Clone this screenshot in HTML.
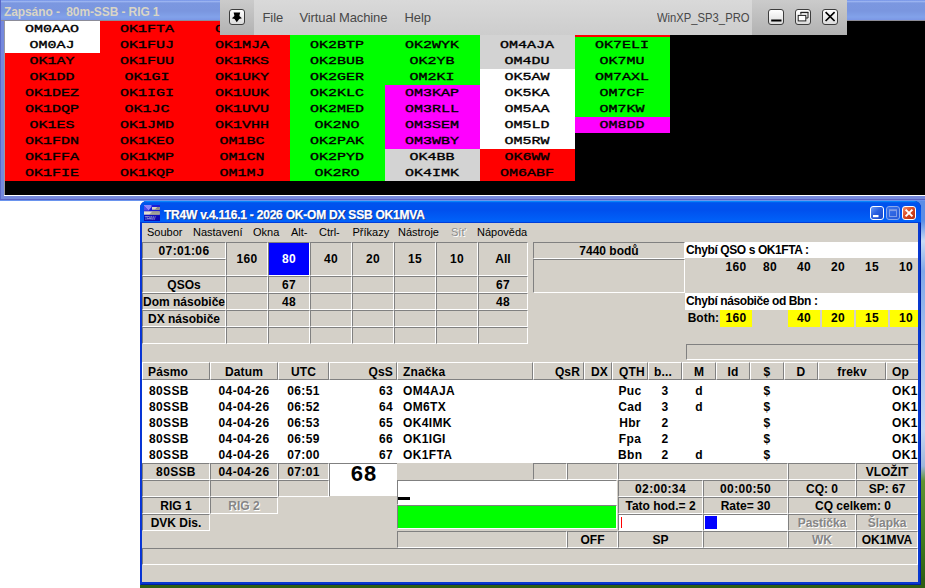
<!DOCTYPE html>
<html lang="cs"><head><meta charset="utf-8"><title>TR4W</title>
<style>
html,body{margin:0;padding:0}
body{width:925px;height:588px;overflow:hidden;background:#fff;position:relative;font-family:"Liberation Sans",sans-serif}
div,span,b,i{box-sizing:border-box}
#wall{position:absolute;left:600px;top:201px;width:325px;height:387px;background:linear-gradient(to bottom,#5a8de6 0,#5a8de6 20px,#c9dcf5 40px,#7fa8ea 70px,#a9c4ef 150px,#c5d7f3 230px,#9cb6dc 265px,#5f9332 280px,#3f7a1c 340px,#2c5a12 387px)}
#wallb{position:absolute;left:140px;top:578px;width:785px;height:10px;background:#2f5e14}
/* top window */
#w1{position:absolute;left:0;top:0;width:925px;height:201px;background:#7488dc;overflow:hidden}
#w1 .tb{position:absolute;left:0;top:0;width:925px;height:21px;background:linear-gradient(to bottom,#7190e6 0,#9ab3f0 1.5px,#7b97e0 3px,#7a96df 11px,#82a2ea 17px,#7d99e6 19.5px,#8c8c98 20.5px,#8c8c98 21px)}
#w1 .tt{position:absolute;left:4px;top:4px;height:16px;line-height:16px;font-weight:bold;font-size:12px;letter-spacing:-.1px;color:#d9d5c6;white-space:pre}
#w1 .cl{position:absolute;left:5px;top:21px;width:920px;height:174px;background:#000}
#w1 .bline{position:absolute;left:4px;top:195px;width:921px;height:1px;background:#fff}
#w1 .gl{position:absolute;left:4px;top:21px;width:1px;height:174px;background:#9a9aa0}
#w1 .lb{position:absolute;left:0;top:0;width:1px;height:201px;background:#5a68c8}
#w1 .bb{position:absolute;left:0;top:199px;width:925px;height:2px;background:linear-gradient(to bottom,#5a62c4 0,#5a62c4 1px,#6a94ee 1px)}
.c{position:absolute;width:95px;height:16px;text-align:center;font-family:"Liberation Mono",monospace;font-weight:normal;font-size:15px;line-height:16px;color:#000;overflow:hidden}
.c span{display:inline-block;transform:translateX(-.5px) scaleY(.78);transform-origin:50% 68%;letter-spacing:0;-webkit-text-stroke:.45px #000}
.r{background:#f00}.g{background:#0f0}.m{background:#f0f}.w{background:#fff}.l{background:#d3d3d3}
/* vm toolbar */
#vm{position:absolute;left:220px;top:0;width:627px;height:35px;background:linear-gradient(to bottom,#d9d9d9,#cdcdcd);color:#484848;font-size:13px;letter-spacing:-.1px}
#vm .dk{position:absolute;top:0;height:35px;background:linear-gradient(to bottom,#cbcbcb,#b2b2b2)}
#vm span{position:absolute;top:10px;line-height:16px;white-space:nowrap}
#vm .bt{position:absolute;top:9px;width:16px;height:16px;border:1px solid #3c3c3c;border-radius:3px;background:linear-gradient(to bottom,#fff,#dcdcdc)}
#vm .bt svg{position:absolute;left:-1px;top:-1px}
/* tr4w */
#w2{position:absolute;left:140px;top:201px;width:781px;height:384px;background:#0838d0;border-radius:7px 7px 0 0;overflow:hidden;box-shadow:inset 1px 0 0 #0831d9,inset -1px 0 0 #001ea0,inset 0 -1px 0 #001ea0}
#w2 .tb{position:absolute;left:0;top:0;width:781px;height:22px;background:linear-gradient(180deg,#0997ff 0,#0053ee 8%,#0050ee 40%,#0060f8 88%,#0060f8 93%,#005bff 95%,#003dd7 97%,#003dd7)}
#w2 .cb{position:absolute;top:5px;width:14px;height:14px;border:1px solid #fff;border-radius:3px;background:linear-gradient(135deg,#6a9cf8 0,#2a60e0 45%,#1a48c8 100%)}
#w2 .cb.x{background:linear-gradient(135deg,#f0906c 0,#d84a24 45%,#b42c0c 100%)}
#w2 .cb.mx{border-color:#8aa8ec;background:linear-gradient(135deg,#3a74ec 0,#2458d8 100%)}
#w2 .cb svg{position:absolute;left:-1px;top:-1px}
#w2 .ic{position:absolute;left:4px;top:4px}
#w2 .tt{position:absolute;left:24px;top:6px;line-height:16px;font-weight:bold;font-size:12px;letter-spacing:-.22px;color:#fff;white-space:pre;text-shadow:1px 1px 0 #0a2a80;-webkit-text-stroke:.25px #fff}
#clip{position:absolute;left:0;top:0;width:918px;height:582px;overflow:hidden}
#face{position:absolute;left:142px;top:223px;width:776px;height:359px;background:#d4d0c8}
.mi{position:absolute;top:224px;font-size:11px;line-height:16px;color:#000;white-space:nowrap}
.dism{color:#8e8e8e;text-shadow:1px 1px 0 #fff}
.s{position:absolute;border:1px solid;border-color:#808080 #fff #fff #808080;background:#d4d0c8;text-align:center;font-weight:bold;font-size:12px;color:#000;white-space:nowrap;overflow:hidden}
.n{letter-spacing:.35px}
.s.blue{background:#00f;color:#fff}
.s.dis{color:#868686;text-shadow:1px 1px 0 #fff}
.wl{position:absolute;background:#fff;font-weight:bold;font-size:12px;line-height:17px;letter-spacing:-.4px;padding-left:1px;overflow:hidden;white-space:nowrap}
.bl{position:absolute;width:32px;height:17px;line-height:17px;text-align:center;font-weight:bold;font-size:12px;letter-spacing:.4px}
.bl.y{background:#ff0}
.h{position:absolute;height:18px;line-height:19px;letter-spacing:.15px;border:1px solid;border-color:#fff #808080 #808080 #fff;background:#d4d0c8;font-weight:bold;font-size:12px;white-space:nowrap;overflow:hidden;padding:0 6px}
.d{position:absolute;height:16px;line-height:16px;font-weight:bold;font-size:12px;letter-spacing:.35px;white-space:nowrap;overflow:hidden;padding:0 6px}
.al{text-align:left}.ac{text-align:center}.ar{text-align:right}
.h.ar{padding-right:3px}.d.ar{padding-right:4px}.h.al{padding-left:5px}
.list{position:absolute;background:#fff}
.big{position:absolute;background:#fff;border-top:1px solid #808080;border-left:1px solid #808080;font-family:"Liberation Mono",monospace;font-weight:bold;font-size:22px;line-height:24px;text-align:center}
.entry{position:absolute;background:#fff;border:1px solid;border-color:#808080 #fff #fff #808080}
.entry i{position:absolute;left:0;top:16px;width:12px;height:3px;background:#000}
.green{position:absolute;background:#0f0;border:1px solid;border-color:#808080 #fff #fff #808080}
.redbar{position:absolute;left:2px;top:2px;width:1px;height:11px;background:#f00}
.bluesq{position:absolute;left:1px;top:1px;width:12px;height:13px;background:#00f}
</style></head><body>
<div id="wall"></div><div id="wallb"></div>
<div id="w1"><div class="tb"></div><div class="lb"></div><div class="tt">Zapsáno -  80m-SSB - RIG 1</div><div class="cl"></div><div class="gl"></div><div class="bline"></div><div class="bb"></div>
<div class="c w" style="left:5px;top:21px"><span>OM0AAO</span></div>
<div class="c w" style="left:5px;top:37px"><span>OM0AJ</span></div>
<div class="c r" style="left:5px;top:53px"><span>OK1AY</span></div>
<div class="c r" style="left:5px;top:69px"><span>OK1DD</span></div>
<div class="c r" style="left:5px;top:85px"><span>OK1DEZ</span></div>
<div class="c r" style="left:5px;top:101px"><span>OK1DQP</span></div>
<div class="c r" style="left:5px;top:117px"><span>OK1ES</span></div>
<div class="c r" style="left:5px;top:133px"><span>OK1FDN</span></div>
<div class="c r" style="left:5px;top:149px"><span>OK1FFA</span></div>
<div class="c r" style="left:5px;top:165px"><span>OK1FIE</span></div>
<div class="c r" style="left:100px;top:21px"><span>OK1FTA</span></div>
<div class="c r" style="left:100px;top:37px"><span>OK1FUJ</span></div>
<div class="c r" style="left:100px;top:53px"><span>OK1FUU</span></div>
<div class="c r" style="left:100px;top:69px"><span>OK1GI</span></div>
<div class="c r" style="left:100px;top:85px"><span>OK1IGI</span></div>
<div class="c r" style="left:100px;top:101px"><span>OK1JC</span></div>
<div class="c r" style="left:100px;top:117px"><span>OK1JMD</span></div>
<div class="c r" style="left:100px;top:133px"><span>OK1KEO</span></div>
<div class="c r" style="left:100px;top:149px"><span>OK1KMP</span></div>
<div class="c r" style="left:100px;top:165px"><span>OK1KQP</span></div>
<div class="c r" style="left:195px;top:21px"><span>OK1MAA</span></div>
<div class="c r" style="left:195px;top:37px"><span>OK1MJA</span></div>
<div class="c r" style="left:195px;top:53px"><span>OK1RKS</span></div>
<div class="c r" style="left:195px;top:69px"><span>OK1UKY</span></div>
<div class="c r" style="left:195px;top:85px"><span>OK1UUK</span></div>
<div class="c r" style="left:195px;top:101px"><span>OK1UVU</span></div>
<div class="c r" style="left:195px;top:117px"><span>OK1VHH</span></div>
<div class="c r" style="left:195px;top:133px"><span>OM1BC</span></div>
<div class="c r" style="left:195px;top:149px"><span>OM1CN</span></div>
<div class="c r" style="left:195px;top:165px"><span>OM1MJ</span></div>
<div class="c g" style="left:290px;top:21px"><span>OK2BPA</span></div>
<div class="c g" style="left:290px;top:37px"><span>OK2BTP</span></div>
<div class="c g" style="left:290px;top:53px"><span>OK2BUB</span></div>
<div class="c g" style="left:290px;top:69px"><span>OK2GER</span></div>
<div class="c g" style="left:290px;top:85px"><span>OK2KLC</span></div>
<div class="c g" style="left:290px;top:101px"><span>OK2MED</span></div>
<div class="c g" style="left:290px;top:117px"><span>OK2NO</span></div>
<div class="c g" style="left:290px;top:133px"><span>OK2PAK</span></div>
<div class="c g" style="left:290px;top:149px"><span>OK2PYD</span></div>
<div class="c g" style="left:290px;top:165px"><span>OK2RO</span></div>
<div class="c g" style="left:385px;top:21px"><span>OK2SG</span></div>
<div class="c g" style="left:385px;top:37px"><span>OK2WYK</span></div>
<div class="c g" style="left:385px;top:53px"><span>OK2YB</span></div>
<div class="c g" style="left:385px;top:69px"><span>OM2KI</span></div>
<div class="c m" style="left:385px;top:85px"><span>OM3KAP</span></div>
<div class="c m" style="left:385px;top:101px"><span>OM3RLL</span></div>
<div class="c m" style="left:385px;top:117px"><span>OM3SEM</span></div>
<div class="c m" style="left:385px;top:133px"><span>OM3WBY</span></div>
<div class="c l" style="left:385px;top:149px"><span>OK4BB</span></div>
<div class="c l" style="left:385px;top:165px"><span>OK4IMK</span></div>
<div class="c l" style="left:480px;top:21px"><span>OK4RO</span></div>
<div class="c l" style="left:480px;top:37px"><span>OM4AJA</span></div>
<div class="c l" style="left:480px;top:53px"><span>OM4DU</span></div>
<div class="c w" style="left:480px;top:69px"><span>OK5AW</span></div>
<div class="c w" style="left:480px;top:85px"><span>OK5KA</span></div>
<div class="c w" style="left:480px;top:101px"><span>OM5AA</span></div>
<div class="c w" style="left:480px;top:117px"><span>OM5LD</span></div>
<div class="c w" style="left:480px;top:133px"><span>OM5RW</span></div>
<div class="c r" style="left:480px;top:149px"><span>OK6WW</span></div>
<div class="c r" style="left:480px;top:165px"><span>OM6ABF</span></div>
<div class="c r" style="left:575px;top:21px"><span>OM6TX</span></div>
<div class="c g" style="left:575px;top:37px"><span>OK7ELI</span></div>
<div class="c g" style="left:575px;top:53px"><span>OK7MU</span></div>
<div class="c g" style="left:575px;top:69px"><span>OM7AXL</span></div>
<div class="c g" style="left:575px;top:85px"><span>OM7CF</span></div>
<div class="c g" style="left:575px;top:101px"><span>OM7KW</span></div>
<div class="c m" style="left:575px;top:117px"><span>OM8DD</span></div>
</div>
<div id="vm"><div class="dk" style="left:0;width:34px"></div><div class="dk" style="left:532px;width:95px"></div>
<div class="bt" style="left:9px"><svg width="16" height="16" viewBox="0 0 16 16"><path d="M4.6 3.4H11.2L10.6 5.8L10.4 7L12.9 9.2L10.2 10L7.8 13.3L5.6 10L2.9 9.2L5.4 7L5.2 5.8Z" fill="#000"/></svg></div>
<span style="left:42.5px">File</span><span style="left:79.5px">Virtual Machine</span><span style="left:184.5px">Help</span><span style="left:437px;transform:scaleX(.865);transform-origin:0 50%;letter-spacing:0">WinXP_SP3_PRO</span>
<div class="bt" style="left:548px"><svg width="16" height="16" viewBox="0 0 16 16"><rect x="3.2" y="10.5" width="10.3" height="2" fill="#000"/></svg></div>
<div class="bt" style="left:575px"><svg width="16" height="16" viewBox="0 0 16 16"><path d="M5.9 5.6V3.4H13V9H11" fill="none" stroke="#222" stroke-width="1"/><rect x="5.4" y="2.9" width="8.1" height="1.2" fill="#222"/><rect x="3.2" y="6.4" width="7.6" height="5.5" fill="#fff" stroke="#222" stroke-width="1"/></svg></div>
<div class="bt" style="left:602px"><svg width="16" height="16" viewBox="0 0 16 16"><path d="M3.6 3.2L12.6 12M12.6 3.2L3.6 12" stroke="#000" stroke-width="1.7" fill="none"/></svg></div>
</div>
<div id="w2"><div class="tb"></div><svg class="ic" width="16" height="16" viewBox="0 0 16 16"><rect width="16" height="16" fill="#1c1cd4"/><polygon points="0,0 7.5,0 7.5,2 4.5,5.6 0,1" fill="#8c86fa"/><polygon points="0,1 4.5,5.6 0,5.6" fill="#5048f0"/><rect x="8" y="2" width="7.6" height="2.7" fill="#d6d6c2"/><polygon points="13.2,2 15.6,2 15.6,4.7 10.6,4.7" fill="#8c8c80"/><rect x="0" y="6.3" width="15.6" height="3.4" fill="#dadaca"/><polygon points="8.6,6.3 15.6,6.3 15.6,9.7 5.2,9.7" fill="#8e8e86"/><rect x="0" y="7.8" width="15.6" height=".5" fill="#f4f4ec" opacity=".7"/><rect x="0" y="10.3" width="16" height="5.7" fill="#0a0ab4"/><text x="0.3" y="14.6" font-family="Liberation Sans,sans-serif" font-size="4.6" font-style="italic" fill="#b4b4dc" textLength="11">TR4W</text></svg><div class="tt">TR4W v.4.116.1 - 2026 OK-OM DX SSB OK1MVA</div>
<div class="cb" style="left:730px"><svg width="14" height="14" viewBox="0 0 14 14"><rect x="3" y="9" width="5.5" height="2.2" fill="#fff"/></svg></div>
<div class="cb mx" style="left:746px"><svg width="14" height="14" viewBox="0 0 14 14"><rect x="3.5" y="4" width="7" height="6.5" fill="none" stroke="#7f9ce8" stroke-width="1"/><rect x="3" y="3.5" width="8" height="1.6" fill="#7f9ce8"/></svg></div>
<div class="cb x" style="left:762px"><svg width="14" height="14" viewBox="0 0 14 14"><path d="M3.6 3.6L10.4 10.4M10.4 3.6L3.6 10.4" stroke="#fff" stroke-width="2" fill="none"/></svg></div>
</div>
<div id="face"></div>
<div id="clip">
<span class="mi" style="left:147px">Soubor</span><span class="mi" style="left:193px">Nastavení</span><span class="mi" style="left:253px">Okna</span><span class="mi" style="left:291px">Alt-</span><span class="mi" style="left:319px">Ctrl-</span><span class="mi" style="left:352.5px">Příkazy</span><span class="mi" style="left:398px">Nástroje</span><span class="mi dism" style="left:451px">Síť</span><span class="mi" style="left:477px">Nápověda</span>
<div class="s  n" style="left:142px;top:242px;width:84px;height:17px;line-height:17px;">07:01:06</div>
<div class="s " style="left:142px;top:259px;width:84px;height:17px;line-height:17px;"></div>
<div class="s  n" style="left:226px;top:242px;width:42px;height:34px;line-height:32px;">160</div>
<div class="s blue n" style="left:268px;top:242px;width:42px;height:34px;line-height:32px;">80</div>
<div class="s  n" style="left:310px;top:242px;width:42px;height:34px;line-height:32px;">40</div>
<div class="s  n" style="left:352px;top:242px;width:42px;height:34px;line-height:32px;">20</div>
<div class="s  n" style="left:394px;top:242px;width:42px;height:34px;line-height:32px;">15</div>
<div class="s  n" style="left:436px;top:242px;width:42px;height:34px;line-height:32px;">10</div>
<div class="s " style="left:478px;top:242px;width:50px;height:34px;line-height:32px;">All</div>
<div class="s " style="left:142px;top:276px;width:84px;height:17px;line-height:17px;">QSOs</div>
<div class="s " style="left:226px;top:276px;width:42px;height:17px;line-height:17px;"></div>
<div class="s  n" style="left:268px;top:276px;width:42px;height:17px;line-height:17px;">67</div>
<div class="s " style="left:310px;top:276px;width:42px;height:17px;line-height:17px;"></div>
<div class="s " style="left:352px;top:276px;width:42px;height:17px;line-height:17px;"></div>
<div class="s " style="left:394px;top:276px;width:42px;height:17px;line-height:17px;"></div>
<div class="s " style="left:436px;top:276px;width:42px;height:17px;line-height:17px;"></div>
<div class="s  n" style="left:478px;top:276px;width:50px;height:17px;line-height:17px;">67</div>
<div class="s " style="left:142px;top:293px;width:84px;height:17px;line-height:17px;">Dom násobiče</div>
<div class="s " style="left:226px;top:293px;width:42px;height:17px;line-height:17px;"></div>
<div class="s  n" style="left:268px;top:293px;width:42px;height:17px;line-height:17px;">48</div>
<div class="s " style="left:310px;top:293px;width:42px;height:17px;line-height:17px;"></div>
<div class="s " style="left:352px;top:293px;width:42px;height:17px;line-height:17px;"></div>
<div class="s " style="left:394px;top:293px;width:42px;height:17px;line-height:17px;"></div>
<div class="s " style="left:436px;top:293px;width:42px;height:17px;line-height:17px;"></div>
<div class="s  n" style="left:478px;top:293px;width:50px;height:17px;line-height:17px;">48</div>
<div class="s " style="left:142px;top:310px;width:84px;height:17px;line-height:17px;">DX násobiče</div>
<div class="s " style="left:226px;top:310px;width:42px;height:17px;line-height:17px;"></div>
<div class="s " style="left:268px;top:310px;width:42px;height:17px;line-height:17px;"></div>
<div class="s " style="left:310px;top:310px;width:42px;height:17px;line-height:17px;"></div>
<div class="s " style="left:352px;top:310px;width:42px;height:17px;line-height:17px;"></div>
<div class="s " style="left:394px;top:310px;width:42px;height:17px;line-height:17px;"></div>
<div class="s " style="left:436px;top:310px;width:42px;height:17px;line-height:17px;"></div>
<div class="s " style="left:478px;top:310px;width:50px;height:17px;line-height:17px;"></div>
<div class="s " style="left:142px;top:327px;width:84px;height:17px;line-height:17px;"></div>
<div class="s " style="left:226px;top:327px;width:42px;height:17px;line-height:17px;"></div>
<div class="s " style="left:268px;top:327px;width:42px;height:17px;line-height:17px;"></div>
<div class="s " style="left:310px;top:327px;width:42px;height:17px;line-height:17px;"></div>
<div class="s " style="left:352px;top:327px;width:42px;height:17px;line-height:17px;"></div>
<div class="s " style="left:394px;top:327px;width:42px;height:17px;line-height:17px;"></div>
<div class="s " style="left:436px;top:327px;width:42px;height:17px;line-height:17px;"></div>
<div class="s " style="left:478px;top:327px;width:50px;height:17px;line-height:17px;"></div>
<div class="s " style="left:533px;top:242px;width:152px;height:17px;line-height:17px;">7440 bodů</div>
<div class="s " style="left:533px;top:259px;width:152px;height:34px;line-height:32px;"></div>
<div class="wl" style="left:685px;top:242px;width:233px;height:16px">Chybí QSO s OK1FTA :</div>
<div class="wl" style="left:685px;top:293px;width:233px;height:17px">Chybí násobiče od Bbn :</div>
<div class="bl" style="left:720px;top:259px;">160</div>
<div class="bl y" style="left:720px;top:310px;">160</div>
<div class="bl" style="left:754px;top:259px;">80</div>
<div class="bl" style="left:788px;top:259px;">40</div>
<div class="bl y" style="left:788px;top:310px;">40</div>
<div class="bl" style="left:822px;top:259px;">20</div>
<div class="bl y" style="left:822px;top:310px;">20</div>
<div class="bl" style="left:856px;top:259px;">15</div>
<div class="bl y" style="left:856px;top:310px;">15</div>
<div class="bl" style="left:890px;top:259px;">10</div>
<div class="bl y" style="left:890px;top:310px;">10</div>
<div class="bl" style="left:686px;top:310px;width:33px;text-align:right;letter-spacing:0">Both:</div>
<div class="s " style="left:686px;top:344px;width:244px;height:16px;line-height:14px;"></div>
<div class="h al" style="left:142px;top:362px;width:68px;">Pásmo</div>
<div class="h ac" style="left:210px;top:362px;width:68px;">Datum</div>
<div class="h ac" style="left:278px;top:362px;width:51px;">UTC</div>
<div class="h ar" style="left:329px;top:362px;width:68px;">QsS</div>
<div class="h al" style="left:397px;top:362px;width:136px;">Značka</div>
<div class="h ar" style="left:533px;top:362px;width:51px;">QsR</div>
<div class="h ac" style="left:584px;top:362px;width:28px;">DX</div>
<div class="h ac" style="left:612px;top:362px;width:36px;">QTH</div>
<div class="h al" style="left:648px;top:362px;width:34px;">b...</div>
<div class="h ac" style="left:682px;top:362px;width:34px;">M</div>
<div class="h ac" style="left:716px;top:362px;width:34px;">Id</div>
<div class="h ac" style="left:750px;top:362px;width:34px;">$</div>
<div class="h ac" style="left:784px;top:362px;width:34px;">D</div>
<div class="h ac" style="left:818px;top:362px;width:68px;">frekv</div>
<div class="h al" style="left:886px;top:362px;width:74px;">Op</div>
<div class="list" style="left:142px;top:380px;width:776px;height:83px"></div>
<div class="d al" style="left:142px;top:383px;width:68px;padding-left:7px;">80SSB</div>
<div class="d ac" style="left:210px;top:383px;width:68px;">04-04-26</div>
<div class="d ac" style="left:278px;top:383px;width:51px;">06:51</div>
<div class="d ar" style="left:329px;top:383px;width:68px;">63</div>
<div class="d al" style="left:397px;top:383px;width:136px;">OM4AJA</div>
<div class="d ac" style="left:612px;top:383px;width:36px;">Puc</div>
<div class="d ac" style="left:648px;top:383px;width:34px;">3</div>
<div class="d ac" style="left:682px;top:383px;width:34px;">d</div>
<div class="d ac" style="left:750px;top:383px;width:34px;">$</div>
<div class="d al" style="left:886px;top:383px;width:74px;">OK1MVA</div>
<div class="d al" style="left:142px;top:399px;width:68px;padding-left:7px;">80SSB</div>
<div class="d ac" style="left:210px;top:399px;width:68px;">04-04-26</div>
<div class="d ac" style="left:278px;top:399px;width:51px;">06:52</div>
<div class="d ar" style="left:329px;top:399px;width:68px;">64</div>
<div class="d al" style="left:397px;top:399px;width:136px;">OM6TX</div>
<div class="d ac" style="left:612px;top:399px;width:36px;">Cad</div>
<div class="d ac" style="left:648px;top:399px;width:34px;">3</div>
<div class="d ac" style="left:682px;top:399px;width:34px;">d</div>
<div class="d ac" style="left:750px;top:399px;width:34px;">$</div>
<div class="d al" style="left:886px;top:399px;width:74px;">OK1MVA</div>
<div class="d al" style="left:142px;top:415px;width:68px;padding-left:7px;">80SSB</div>
<div class="d ac" style="left:210px;top:415px;width:68px;">04-04-26</div>
<div class="d ac" style="left:278px;top:415px;width:51px;">06:53</div>
<div class="d ar" style="left:329px;top:415px;width:68px;">65</div>
<div class="d al" style="left:397px;top:415px;width:136px;">OK4IMK</div>
<div class="d ac" style="left:612px;top:415px;width:36px;">Hbr</div>
<div class="d ac" style="left:648px;top:415px;width:34px;">2</div>
<div class="d ac" style="left:750px;top:415px;width:34px;">$</div>
<div class="d al" style="left:886px;top:415px;width:74px;">OK1MVA</div>
<div class="d al" style="left:142px;top:431px;width:68px;padding-left:7px;">80SSB</div>
<div class="d ac" style="left:210px;top:431px;width:68px;">04-04-26</div>
<div class="d ac" style="left:278px;top:431px;width:51px;">06:59</div>
<div class="d ar" style="left:329px;top:431px;width:68px;">66</div>
<div class="d al" style="left:397px;top:431px;width:136px;">OK1IGI</div>
<div class="d ac" style="left:612px;top:431px;width:36px;">Fpa</div>
<div class="d ac" style="left:648px;top:431px;width:34px;">2</div>
<div class="d ac" style="left:750px;top:431px;width:34px;">$</div>
<div class="d al" style="left:886px;top:431px;width:74px;">OK1MVA</div>
<div class="d al" style="left:142px;top:447px;width:68px;padding-left:7px;">80SSB</div>
<div class="d ac" style="left:210px;top:447px;width:68px;">04-04-26</div>
<div class="d ac" style="left:278px;top:447px;width:51px;">07:00</div>
<div class="d ar" style="left:329px;top:447px;width:68px;">67</div>
<div class="d al" style="left:397px;top:447px;width:136px;">OK1FTA</div>
<div class="d ac" style="left:612px;top:447px;width:36px;">Bbn</div>
<div class="d ac" style="left:648px;top:447px;width:34px;">2</div>
<div class="d ac" style="left:682px;top:447px;width:34px;">d</div>
<div class="d ac" style="left:750px;top:447px;width:34px;">$</div>
<div class="d al" style="left:886px;top:447px;width:74px;">OK1MVA</div>
<div class="s  n" style="left:142px;top:463px;width:68px;height:17px;line-height:17px;">80SSB</div>
<div class="s  n" style="left:210px;top:463px;width:68px;height:17px;line-height:17px;">04-04-26</div>
<div class="s  n" style="left:278px;top:463px;width:51px;height:17px;line-height:17px;">07:01</div>
<div class="big" style="left:329px;top:463px;width:68px;height:33px">68</div>
<div class="s " style="left:533px;top:463px;width:34px;height:17px;line-height:17px;"></div>
<div class="s " style="left:567px;top:463px;width:51px;height:17px;line-height:17px;"></div>
<div class="s " style="left:618px;top:463px;width:170px;height:17px;line-height:17px;"></div>
<div class="s " style="left:788px;top:463px;width:68px;height:17px;line-height:17px;"></div>
<div class="s " style="left:856px;top:463px;width:62px;height:17px;line-height:17px;">VLOŽIT</div>
<div class="s " style="left:142px;top:480px;width:68px;height:17px;line-height:17px;"></div>
<div class="s " style="left:210px;top:480px;width:68px;height:17px;line-height:17px;"></div>
<div class="s " style="left:278px;top:480px;width:51px;height:17px;line-height:17px;"></div>
<div class="entry" style="left:397px;top:480px;width:220px;height:25px"><i></i></div>
<div class="s  n" style="left:618px;top:480px;width:85px;height:17px;line-height:17px;">02:00:34</div>
<div class="s  n" style="left:703px;top:480px;width:85px;height:17px;line-height:17px;">00:00:50</div>
<div class="s " style="left:788px;top:480px;width:68px;height:17px;line-height:17px;">CQ: 0</div>
<div class="s " style="left:856px;top:480px;width:62px;height:17px;line-height:17px;">SP: 67</div>
<div class="s " style="left:142px;top:497px;width:68px;height:17px;line-height:17px;">RIG 1</div>
<div class="s dis" style="left:210px;top:497px;width:68px;height:17px;line-height:17px;">RIG 2</div>
<div class="s " style="left:618px;top:497px;width:85px;height:17px;line-height:17px;">Tato hod.= 2</div>
<div class="s " style="left:703px;top:497px;width:85px;height:17px;line-height:17px;">Rate= 30</div>
<div class="s " style="left:788px;top:497px;width:130px;height:17px;line-height:17px;">CQ celkem: 0</div>
<div class="s " style="left:142px;top:514px;width:68px;height:17px;line-height:17px;">DVK Dis.</div>
<div class="s " style="left:618px;top:514px;width:85px;height:17px;line-height:17px;background:#fff"><b class="redbar"></b></div>
<div class="s " style="left:703px;top:514px;width:85px;height:17px;line-height:17px;background:#fff"><b class="bluesq"></b></div>
<div class="s dis" style="left:788px;top:514px;width:68px;height:17px;line-height:17px;">Pastička</div>
<div class="s dis" style="left:856px;top:514px;width:62px;height:17px;line-height:17px;">Šlapka</div>
<div class="green" style="left:397px;top:505px;width:220px;height:24px"></div>
<div class="s " style="left:397px;top:531px;width:170px;height:17px;line-height:17px;"></div>
<div class="s " style="left:567px;top:531px;width:51px;height:17px;line-height:17px;">OFF</div>
<div class="s " style="left:618px;top:531px;width:85px;height:17px;line-height:17px;">SP</div>
<div class="s " style="left:703px;top:531px;width:85px;height:17px;line-height:17px;"></div>
<div class="s dis" style="left:788px;top:531px;width:68px;height:17px;line-height:17px;">WK</div>
<div class="s " style="left:856px;top:531px;width:62px;height:17px;line-height:17px;">OK1MVA</div>
<div class="s " style="left:142px;top:548px;width:776px;height:17px;line-height:17px;"></div>
</div>
</body></html>
